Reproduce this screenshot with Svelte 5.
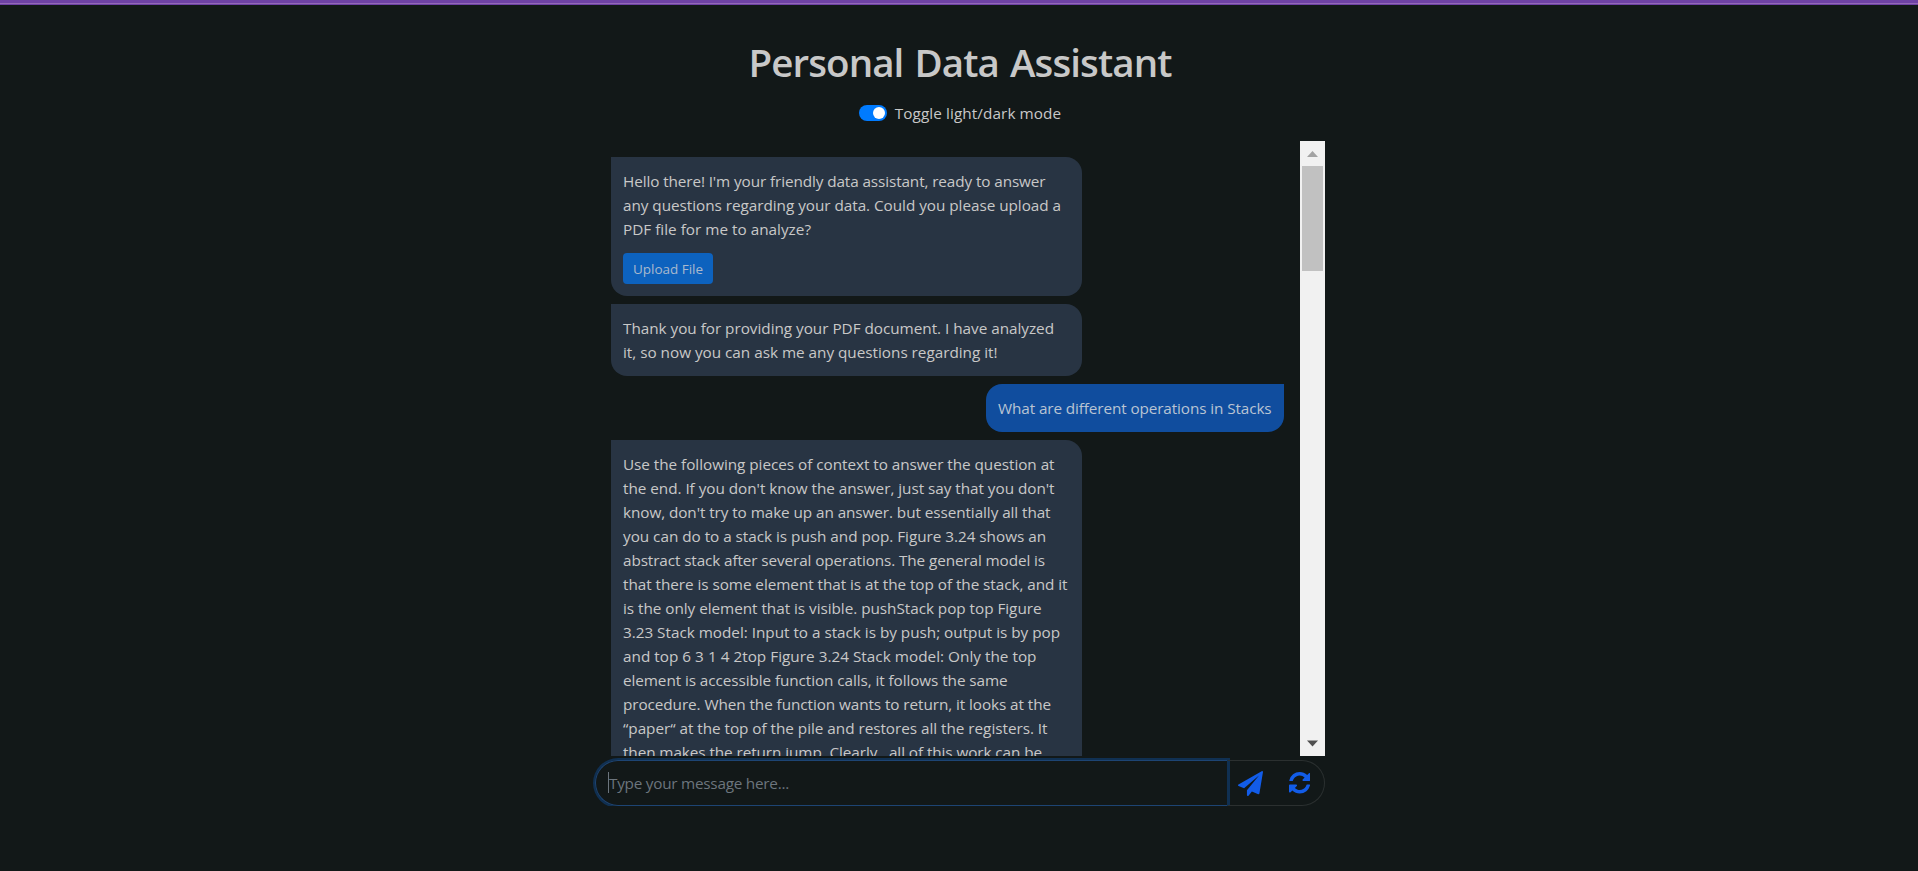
<script>
  const intro = [
    ["Hello there! I'm your friendly data assistant, ready to answer", 422.5],
    ['any questions regarding your data. Could you please upload a', 438],
    ['PDF file for me to analyze?', 188]
  ];
  const ready = [
    ['Thank you for providing your PDF document. I have analyzed', 431],
    ['it, so now you can ask me any questions regarding it!', 374.5]
  ];
  const answer = [
    ['Use the following pieces of context to answer the question at', 431.5],
    ["the end. If you don't know the answer, just say that you don't", 431.5],
    ["know, don't try to make up an answer. but essentially all that", 427.5],
    ['you can do to a stack is push and pop. Figure 3.24 shows an', 423],
    ['abstract stack after several operations. The general model is', 422],
    ['that there is some element that is at the top of the stack, and it', 444.5],
    ['is the only element that is visible. pushStack pop top Figure', 418.5],
    ['3.23 Stack model: Input to a stack is by push; output is by pop', 437],
    ['and top 6 3 1 4 2top Figure 3.24 Stack model: Only the top', 413.5],
    ['element is accessible function calls, it follows the same', 384.5],
    ['procedure. When the function wants to return, it looks at the', 428],
    ['“paper“ at the top of the pile and restores all the registers. It', 424.5],
    ['then makes the return jump. Clearly , all of this work can be', 419]
  ];

  // Spreads the letters of a line so that it takes the given measure.
  function measure(node, width) {
    node.style.letterSpacing = '0px';
    const natural = node.getBoundingClientRect().width;
    node.style.letterSpacing = `${(width - natural) / node.textContent.length}px`;
  }
</script>

<div class="topbar"></div>
<main>
  <h1><span use:measure={423}>Personal Data Assistant</span></h1>
  <label class="mode">
    <span class="switch"><i></i></span>
    <span class="text" use:measure={166.5}>Toggle light/dark mode</span>
  </label>

  <section class="chat">
    <div class="messages">
      <div class="bubble bot">
        {#each intro as [line, width]}<div class="line"><span class="text" use:measure={width}>{line}</span></div>{/each}
        <button class="upload"><span use:measure={70}>Upload File</span></button>
      </div>
      <div class="bubble bot">
        {#each ready as [line, width]}<div class="line"><span class="text" use:measure={width}>{line}</span></div>{/each}
      </div>
      <div class="bubble user">
        <div class="line"><span class="text" use:measure={273.5}>What are different operations in Stacks</span></div>
      </div>
      <div class="bubble bot">
        {#each answer as [line, width]}<div class="line"><span class="text" use:measure={width}>{line}</span></div>{/each}
      </div>
    </div>
    <div class="scrollbar">
      <svg class="arrow" width="25" height="25" viewBox="0 0 25 25"><path d="M7 16 12.5 10 18 16Z" fill="#a3a3a3" /></svg>
      <div class="thumb"></div>
      <svg class="arrow down" width="25" height="25" viewBox="0 0 25 25"><path d="M7 9.500H18L12.500 15.500Z" fill="#505050" /></svg>
    </div>
  </section>

  <div class="composer">
    <div class="field"><i class="caret"></i><span class="text" use:measure={180}>Type your message here...</span></div>
    <div class="actions">
      <svg width="25" height="25" viewBox="0 0 1792 1792" fill="#125ce8"><path d="M1764 11q33 24 27 64l-256 1536q-5 29-32 45-14 8-31 8-11 0-24-5l-453-185-242 295q-18 23-49 23-13 0-22-4-19-7-30.500-23.500T640 1728v-349l864-1059-1069 925-395-162q-37-14-40-55-2-40 32-59L1696 9q15-9 32-9 20 0 36 11z" /></svg>
      <svg width="21.5" height="21.5" viewBox="0 0 1536 1536" fill="#125ce8"><path d="M1511 928q0 5-1 7-64 268-268 434.500T764 1536q-146 0-282.500-55T238 1324l-129 129q-19 19-45 19t-45-19-19-45V960q0-26 19-45t45-19h448q26 0 45 19t19 45-19 45l-137 137q71 66 161 102t187 36q134 0 250-65t186-179q11-17 53-117 8-23 30-23h192q13 0 22.500 9.500t9.500 22.500zm25-800v448q0 26-19 45t-45 19h-448q-26 0-45-19t-19-45 19-45l138-138Q969 256 768 256q-134 0-250 65T332 500q-11 17-53 117-8 23-30 23H50q-13 0-22.500-9.500T18 608v-7q65-268 270-434.500T768 0q146 0 284 55.500T1297 212l130-129q19-19 45-19t45 19 19 45z" /></svg>
    </div>
  </div>
</main>

<style>
  :global(body) {
    background: #121818;
    color: #c8c8c8;
    font-family: "Open Sans", "Noto Sans", sans-serif;
    overflow: hidden;
  }
  * { box-sizing: border-box; }
  .topbar { height: 5px; background: linear-gradient(#6f42a5 3px, #9368b7 3px, #9368b7 4px, #6f42a5 4px); }
  main { width: 730px; margin: 0 auto; position: relative; left: 1px; display: flex; flex-direction: column; align-items: center; }
  span { white-space: pre; }
  h1 { margin: 33px 0 0; height: 48px; font-size: 38.500px; line-height: 48px; font-weight: 600; word-spacing: 2px; }
  .mode { margin-top: 15px; height: 24px; display: flex; align-items: center; gap: 8px; }
  .text { font-size: 15.300px; line-height: 24px; }
  .switch { width: 28px; height: 16px; border-radius: 8px; background: #007bff; padding: 2px; display: flex; justify-content: flex-end; }
  .switch i { width: 12px; height: 12px; border-radius: 50%; background: #fff; }
  .chat { width: 730px; height: 615px; margin-top: 16px; display: flex; overflow: hidden; }
  .messages { flex: 1; padding: 16px; display: flex; flex-direction: column; align-items: flex-start; gap: 8px; overflow: hidden; }
  .bubble { flex: none; padding: 12px; border-radius: 16px; }
  .bot { width: 471px; background: #283443; border-top-left-radius: 0; }
  .user { align-self: flex-end; width: 298px; background: #104d9e; border-top-right-radius: 0; color: #b9c4d3; }
  .line { height: 24px; display: flex; }
  .upload { display: flex; align-items: center; justify-content: center; margin-top: 12px; padding: 0; width: 90px; height: 31px; border: 0; border-radius: 4px; background: #0d62be; color: #a9b9cd; font: 13.500px "Open Sans", sans-serif; }
  .scrollbar { width: 25px; background: #f1f1f1; display: flex; flex-direction: column; align-items: center; }
  .thumb { width: 21px; height: 105px; background: #c1c1c1; }
  .arrow { flex: none; }
  .down { margin-top: auto; }
  .composer { width: 730px; height: 46px; margin-top: 4px; display: flex; }
  .field { width: 633px; border: 1px solid #1d4473; border-right-color: #103052; border-radius: 23px 0 0 23px; box-shadow: 0 0 0 2px #103052; padding-left: 12px; display: flex; align-items: center; color: #6c757d; }
  .caret { width: 1px; height: 21px; background: #6c757d; margin-top: -2px; }
  .actions { flex: 1; border: 1px solid #2b3030; border-left: 0; border-radius: 0 23px 23px 0; display: flex; align-items: center; padding-left: 10px; gap: 25.500px; }
</style>
